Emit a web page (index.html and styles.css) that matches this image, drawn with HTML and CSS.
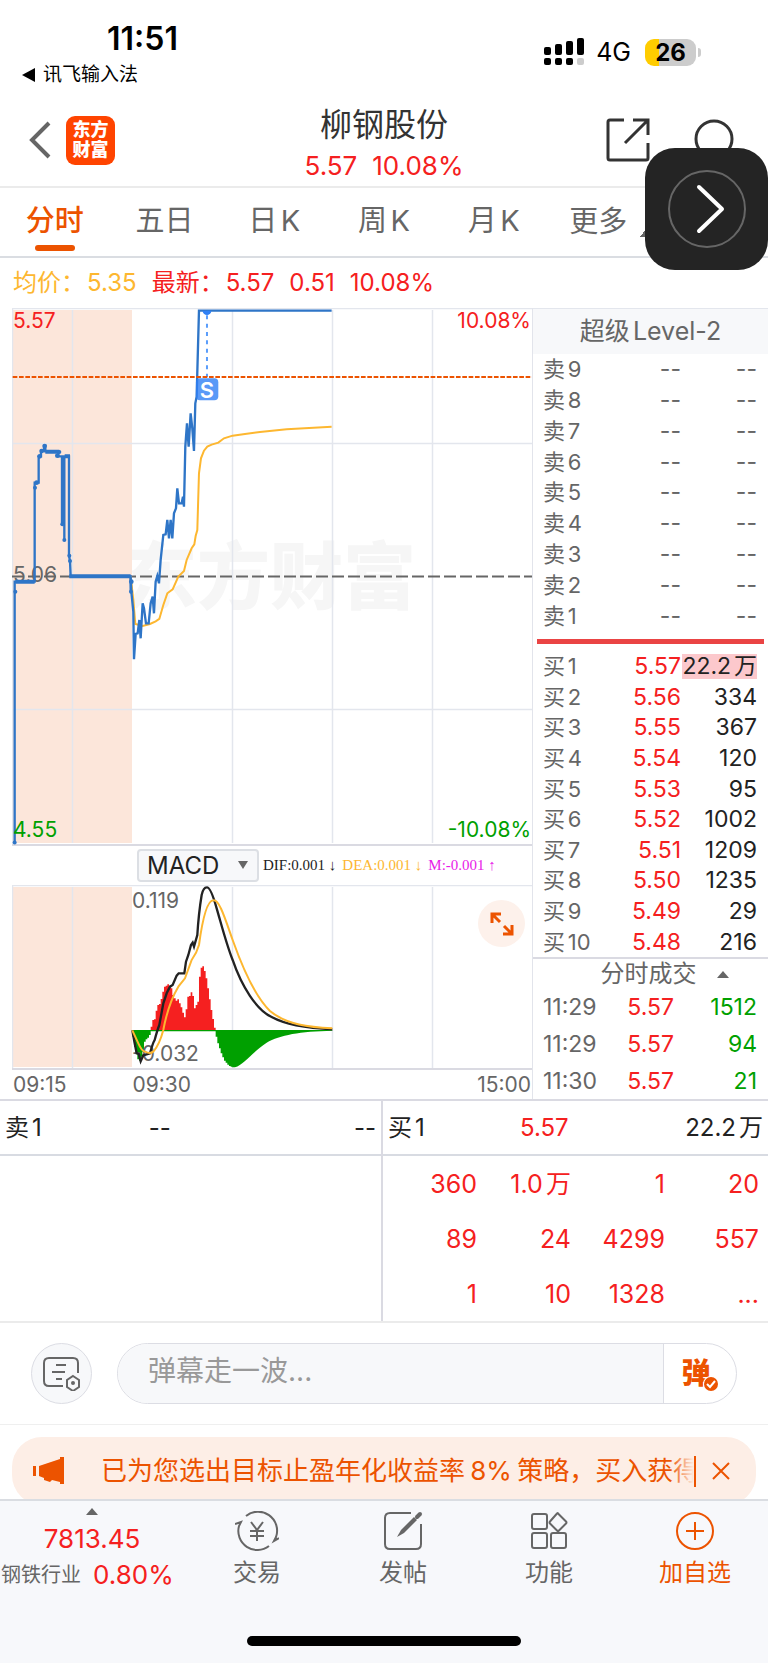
FILE: index.html
```
<!DOCTYPE html>
<html lang="zh-CN">
<head>
    <meta charset="UTF-8">
    <meta name="viewport" content="width=device-width, initial-scale=1.0">
    <title>柳钢股份 - 分时</title>
    <link rel="stylesheet" href="styles.css">
</head>
<body>
    <!-- Status bar -->
    <div class="status-bar">
        <div class="status-left">
            <div class="time">11:51</div>
            <a class="back-app" href="#"><span class="arrow-left"></span>讯飞输入法</a>
        </div>
        <div class="status-right">
            <svg class="signal" width="40" height="28" viewBox="0 0 40 28">
                <rect x="0" y="9" width="7" height="8" rx="2"/>
                <rect x="11" y="6" width="7" height="11" rx="2"/>
                <rect x="22" y="3" width="7" height="14" rx="2"/>
                <rect x="33" y="0" width="7" height="17" rx="2"/>
                <rect x="0" y="20" width="7" height="7" rx="2"/>
                <rect x="11" y="20" width="7" height="7" rx="2"/>
                <rect x="22" y="20" width="7" height="7" rx="2"/>
                <rect x="33" y="20" width="7" height="7" rx="2" fill="#ccc"/>
            </svg>
            <span class="network">4G</span>
            <span class="battery">26</span>
        </div>
    </div>

    <!-- Header -->
    <header class="header">
        <div class="header-left">
            <button class="icon-btn" aria-label="返回">
                <svg width="22" height="38" viewBox="0 0 22 38"><path d="M20 2L3 19l17 17" fill="none" stroke="#666" stroke-width="4"/></svg>
            </button>
            <a class="logo" href="#">东方<br>财富</a>
        </div>
        <div class="header-title">
            <h1>柳钢股份</h1>
            <p><span>5.57</span><span>10.08%</span></p>
        </div>
        <div class="header-right">
            <button class="icon-btn" aria-label="分享">
                <svg width="44" height="44" viewBox="0 0 44 44"><path d="M18 2H4q-2 0-2 2v36q0 2 2 2h36q2 0 2-2V25M27 2h15v15M42 2L19 25" fill="none" stroke="#333" stroke-width="3"/></svg>
            </button>
            <button class="icon-btn" aria-label="搜索">
                <svg width="44" height="44" viewBox="0 0 44 44"><path d="M33 34l9 9" stroke="#333" stroke-width="3"/><circle cx="22" cy="21" r="18" fill="none" stroke="#333" stroke-width="3"/></svg>
            </button>
        </div>
    </header>

    <!-- Tabs -->
    <nav class="tabs">
        <a class="tab active" href="#">分时</a>
        <a class="tab" href="#">五日</a>
        <a class="tab" href="#">日K</a>
        <a class="tab" href="#">周K</a>
        <a class="tab" href="#">月K</a>
        <a class="tab more" href="#">更多<span class="corner"></span></a>
    </nav>

    <button class="float-btn" aria-label="展开">
        <svg width="80" height="80" viewBox="0 0 80 80" fill="none" stroke-linecap="round" stroke-linejoin="round">
            <circle cx="40" cy="40" r="38" stroke="#666" stroke-width="2"/>
            <path d="M32 18l23 22-23 22" stroke="#fff" stroke-width="4"/>
        </svg>
    </button>

    <div class="summary">
        <span class="name avg">均价：</span><span class="avg">5.35</span>
        <span class="name">最新：</span><span>5.57</span><span>0.51</span><span>10.08%</span>
    </div>

    <main class="quote">
        <section class="charts">
            <!-- Price chart -->
            <svg class="price-chart" viewBox="0 0 520 538">
                <text class="watermark" x="112" y="295">东方财富</text>
                <rect class="preopen" x="0" y="2" width="120" height="533"/>
                <path class="grid" d="M0 135.500H520M0 401.500H520M60.500 2V535M220.500 2V535M320.500 2V535M420.500 2V535"/>
                <path class="grid" d="M.5 538V.5H520"/>
                <path class="mid-line" d="M0 268.500H520"/>
                <path class="base-line" d="M0 537H520"/>
                <text class="label gray" x="1" y="274">5.06</text>
                <g transform="translate(-12 -8) scale(.3333)">
                    <path class="price" d="M44 1628V875M44 1628V845H104V548H116V469H123V453H132V438H136V454H175V469H186V673V469H193V720V469H207V767L210 783L212 829H392V875"/>
                    <path class="avg-line" d="M392 829L400 900L406 972L428 978L450 972L467 964L478 957L490 915L502 880L518 868L535 830L552 813L560 780L575 745L583 733L587 708L592 690L597 520L603 475L612 452L622 440L635 434L655 428L672 415L698 407L735 402L780 396L860 388L995 380"/>
                    <path class="price" d="M392 829L394 875L400 935L402 1078L407 1002L413 1000L418 960L422 1015L428 910L432 925L438 970H446L452 910L458 890L462 940L467 845L472 828L477 850L482 780L490 705L497 703L502 660L507 715L512 660L517 715L522 640L528 625L532 565L537 610H545L549 590L552 620L556 440L561 370L566 440L572 340L577 385L582 453L586 310L590 290L597 32H995"/>
                    <g class="dots">
                        <circle cx="44" cy="1628" r="6"/><circle cx="46" cy="875" r="6"/><circle cx="105" cy="563" r="6"/>
                        <circle cx="110" cy="548" r="7"/><circle cx="119" cy="469" r="7"/><circle cx="125" cy="453" r="7"/>
                        <circle cx="134" cy="438" r="7"/><circle cx="172" cy="467" r="7"/><circle cx="178" cy="456" r="6"/>
                        <circle cx="187" cy="673" r="6"/><circle cx="193" cy="720" r="6"/><circle cx="208" cy="767" r="6"/>
                        <circle cx="210" cy="783" r="6"/><circle cx="394" cy="845" r="7"/><circle cx="393" cy="875" r="6"/>
                    </g>
                    <path class="pre-flat" d="M46 845H104M208 829H392M136 455H178M194 469H210"/>
                    <path d="M608 32a13 13 0 0 0 26 0z" fill="#2f80f5"/>
                    <path class="mark-line" d="M621 46V231"/>
                    <path class="limit-line" d="M38 231H1597"/>
                    <rect x="588" y="235" width="67" height="66" rx="12" fill="#2f80f5" fill-opacity=".8"/>
                </g>
                <text class="mark" x="195" y="90">S</text>
                <text class="label red" x="1" y="20">5.57</text>
                <text class="label red end" x="519" y="20">10.08%</text>
                <text class="label green" x="1" y="529">4.55</text>
                <text class="label green end" x="519" y="529">-10.08%</text>
            </svg>

            <!-- Indicator -->
            <div class="indicator">
                <div class="indicator-select">
                    <select aria-label="指标">
                        <option>MACD</option>
                    </select>
                </div>
                <span class="dif">DIF:0.001 ↓</span>
                <span class="dea">DEA:0.001 ↓</span>
                <span class="macd">M:-0.001 ↑</span>
            </div>

            <div class="macd-wrap">
                <svg class="macd-chart" viewBox="0 0 520 186">
                    <rect class="preopen" x="0" y="2" width="120" height="180"/>
                    <path class="grid" d="M60.500 2V183M220.500 2V183M320.500 2V183M420.500 2V183"/>
                    <path class="grid" d="M.5 184V.5H520"/>
                    <path class="base-line" d="M0 184H520"/>
                    <g transform="translate(108 -15) scale(.3333)">
                        <path class="bar-up" d="M92 481V470h5V450h5v-2h5V422h5V405h5V402h5V387h5V365h5V350h5V347h5V343h5V347h5V355h5V375h5V385h5V392h5V388h5V400h5V412h5V428h5V442h5V418h5V380h5V378h5V367h5V378h5V415h5V405h5V395h5V320h5V293h5V289h5V303h5V325h5V355h5V388h5V420h5V447h5V473h5V481z"/>
                        <path class="bar-down" d="M37 480V500h5V530h5V550h5V568h5V572h5V560h5V545h5V515h5V508h5V503h5V495h5V484H287V500h5V520h5V535h5V550h5V562h5V572h5V578h5V584h5V588h5V590h5V592H345C372 584 395 548 440 518C480 495 540 484 637 482V480z"/>
                    </g>
                    <text class="label gray" x="120" y="23">0.119</text>
                    <text class="label gray" x="120" y="176">-0.032</text>
                    <g transform="translate(108 -15) scale(.3333)">
                        <path class="dif-line" d="M37 481L43 515L50 550L56 552L62 574L70 556L90 550Q98 520 104 510Q112 480 118 465L130 400L140 370L150 350L158 345L170 317L176 310L193 310L198 275L205 255L213 225L218 218L222 230L232 195Q236 130 245 75Q250 52 260 52Q272 50 290 115C306 170 320 225 338 270C365 350 410 420 455 441C500 466 570 475 637 478"/>
                        <path class="dea-line" d="M37 481L55 520Q65 543 75 545Q90 553 100 545Q118 525 130 480Q145 400 175 350L195 325L215 270Q230 250 237 225Q255 92 280 91C298 88 315 145 338 210C370 300 405 380 450 423C500 465 570 472 637 475"/>
                    </g>
                </svg>
                <button class="expand-btn" aria-label="全屏">
                    <svg width="24" height="24" viewBox="0 0 24 24" fill="none" stroke="#ec5300" stroke-width="3"><path d="M2 11V2h9M2 2l8 8M22 13v9h-9M22 22l-8-8"/></svg>
                </button>
            </div>

            <div class="times"><span>09:15</span><span>09:30</span><span>15:00</span></div>
        </section>

        <!-- Order book -->
        <section class="book">
            <h2>超级Level-2</h2>
            <table class="levels sell">
                <tr><th>卖9</th><td>--</td><td>--</td></tr>
                <tr><th>卖8</th><td>--</td><td>--</td></tr>
                <tr><th>卖7</th><td>--</td><td>--</td></tr>
                <tr><th>卖6</th><td>--</td><td>--</td></tr>
                <tr><th>卖5</th><td>--</td><td>--</td></tr>
                <tr><th>卖4</th><td>--</td><td>--</td></tr>
                <tr><th>卖3</th><td>--</td><td>--</td></tr>
                <tr><th>卖2</th><td>--</td><td>--</td></tr>
                <tr><th>卖1</th><td>--</td><td>--</td></tr>
            </table>
            <div class="divider"></div>
            <table class="levels buy">
                <tr><th>买1</th><td>5.57</td><td><span class="big">22.2万</span></td></tr>
                <tr><th>买2</th><td>5.56</td><td>334</td></tr>
                <tr><th>买3</th><td>5.55</td><td>367</td></tr>
                <tr><th>买4</th><td>5.54</td><td>120</td></tr>
                <tr><th>买5</th><td>5.53</td><td>95</td></tr>
                <tr><th>买6</th><td>5.52</td><td>1002</td></tr>
                <tr><th>买7</th><td>5.51</td><td>1209</td></tr>
                <tr><th>买8</th><td>5.50</td><td>1235</td></tr>
                <tr><th>买9</th><td>5.49</td><td>29</td></tr>
                <tr><th>买10</th><td>5.48</td><td>216</td></tr>
            </table>
            <h3>分时成交<span class="tri-up"></span></h3>
            <table class="levels ticks">
                <tr><th>11:29</th><td>5.57</td><td>1512</td></tr>
                <tr><th>11:29</th><td>5.57</td><td>94</td></tr>
                <tr><th>11:30</th><td>5.57</td><td>21</td></tr>
            </table>
        </section>
    </main>

    <!-- Queue -->
    <section class="queue">
        <div class="queue-side">
            <div class="queue-head"><span>卖1</span><span>--</span><span>--</span></div>
        </div>
        <div class="queue-side">
            <div class="queue-head"><span>买1</span><span class="red">5.57</span><span>22.2万</span></div>
            <table class="queue-table">
                <tr><td>360</td><td>1.0万</td><td>1</td><td>20</td></tr>
                <tr><td>89</td><td>24</td><td>4299</td><td>557</td></tr>
                <tr><td>1</td><td>10</td><td>1328</td><td>...</td></tr>
            </table>
        </div>
    </section>

    <!-- Comment bar -->
    <div class="danmu">
        <button class="danmu-set" aria-label="弹幕设置">
            <svg width="38" height="34" viewBox="0 0 38 34" fill="none" stroke="#666" stroke-width="2">
                <path d="M20 29H6q-5 0-5-5V6q0-5 5-5h24q5 0 5 5v10M13 8h10M9 15h13M13 22h6"/>
                <path d="M30 19l6 4v7l-6 4-6-4v-7z"/><circle cx="30" cy="26" r="1" fill="#666"/>
            </svg>
        </button>
        <div class="danmu-box">
            <input type="text" placeholder="弹幕走一波..." aria-label="弹幕">
            <button class="danmu-send"><span>弹</span>
                <svg width="16" height="16" viewBox="0 0 16 16"><circle cx="8" cy="8" r="8" fill="#fff"/><circle cx="8" cy="8" r="7" fill="#ec5300"/><path d="M4 8l3 3 5-6" fill="none" stroke="#fff" stroke-width="2"/></svg>
            </button>
        </div>
    </div>

    <div class="notice-wrap">
        <div class="notice">
            <svg width="32" height="28" viewBox="0 0 32 28" fill="#ec5300"><path d="M0 9h3v10H0zM6 9l21-7V0h4v27h-4v-2l-8-2-2 2-6-2v-2l-5-2z"/></svg>
            <p>已为您选出目标止盈年化收益率<span class="rate">8%</span>策略，买入获得</p>
            <button class="icon-btn" aria-label="关闭">
                <svg width="18" height="18" viewBox="0 0 18 18"><path d="M1 1l16 16M17 1L1 17" stroke="#ec5300" stroke-width="2"/></svg>
            </button>
        </div>
    </div>

    <!-- Bottom bar -->
    <footer class="footer">
        <nav class="bottom-nav">
            <a class="sector" href="#">
                <span class="tri-up"></span>
                <span class="index">7813.45</span>
                <span class="sector-row">钢铁行业<b>0.80%</b></span>
            </a>
            <a class="nav-item" href="#">
                <svg width="44" height="40" viewBox="0 0 44 40" fill="none" stroke="#666" stroke-width="2">
                    <path d="M11 5A19 19 0 0 1 41 26L39 30L44 27M34 35A19 19 0 0 1 4 15L6 11L0 13"/>
                    <path d="M16 11l6 8 6-8M15 20h14M15 25h14M22 19v11"/>
                </svg>
                交易
            </a>
            <a class="nav-item" href="#">
                <svg width="40" height="40" viewBox="0 0 40 40" fill="none" stroke="#666" stroke-width="2">
                    <path d="M28 2H7Q2 2 2 7v26q0 5 5 5h26q5 0 5-5V13"/>
                    <path d="M14 26l4-7L31 6l3 3-13 13z" fill="#666" stroke="none"/><path d="M34 6l3-3" stroke-width="4" stroke-linecap="round"/>
                </svg>
                发帖
            </a>
            <a class="nav-item" href="#">
                <svg width="38" height="40" viewBox="0 0 38 40" fill="none" stroke="#666" stroke-width="2">
                    <rect x="2" y="3" width="15" height="15" rx="2"/><rect x="2" y="22" width="15" height="15" rx="2"/><rect x="21" y="22" width="15" height="15" rx="2"/>
                    <path d="M28 2.500l8 8q1 1 0 2l-7 7q-1 1-2 0l-7-7q-1-1 0-2l7-8q1-1 1 0z"/>
                </svg>
                功能
            </a>
            <a class="nav-item add" href="#">
                <svg width="40" height="40" viewBox="0 0 40 40" fill="none" stroke="#ec5300" stroke-width="2"><circle cx="20" cy="20" r="18"/><path d="M11 20h18M20 11v18"/></svg>
                加自选
            </a>
        </nav>
        <div class="home-bar"></div>
    </footer>
</body>
</html>
```
FILE: styles.css
```
* {
    box-sizing: border-box;
}
body {
    margin: 0;
    position: relative;
    background: #fff;
    color: #222;
    font-family: Inter, "Noto Sans CJK SC", sans-serif;
    text-autospace: normal;
    overflow-x: hidden;
}
h1, h2, h3, p {
    margin: 0;
    font-weight: 400;
}
a {
    color: inherit;
    text-decoration: none;
}
button, input, select {
    font-family: inherit;
    border: 0;
    padding: 0;
    background: none;
}
svg {
    display: block;
}
table {
    width: 100%;
    border-collapse: collapse;
    table-layout: fixed;
}
th, td {
    padding: 0;
    font-weight: 400;
    text-align: right;
}
.red {
    color: #f52020;
}

/* Status bar */
.status-bar {
    display: flex;
    justify-content: space-between;
    height: 94px;
    color: #000;
}
.status-left {
    padding: 20px 0 0 22px;
}
.time {
    padding-left: 85px;
    font-size: 32px;
    line-height: 38px;
    font-weight: 600;
}
.back-app {
    display: flex;
    align-items: center;
    gap: 8px;
    font-size: 19px;
    line-height: 34px;
}
.arrow-left {
    border: 7px solid transparent;
    border-right: 13px solid #000;
    border-left: 0;
}
.status-right {
    display: flex;
    align-items: center;
    height: 104px;
    padding-right: 72px;
}
.network {
    margin: 0 14px 0 12px;
    font-size: 25px;
    line-height: 30px;
}
.battery {
    position: relative;
    width: 51px;
    height: 27px;
    border-radius: 9px;
    background: linear-gradient(to right, #ffcc00 14px, #ccc 14px);
    font-size: 24px;
    line-height: 27px;
    font-weight: 700;
    text-align: center;
}
.battery::after {
    content: "";
    position: absolute;
    right: -5px;
    top: 9px;
    width: 3px;
    height: 9px;
    border-radius: 0 4px 4px 0;
    background: #ccc;
}

/* Header */
.header {
    display: grid;
    grid-template-columns: 1fr auto 1fr;
    align-items: center;
    height: 94px;
    border-bottom: 2px solid #ebebeb;
}
.header-left {
    display: flex;
    align-items: center;
    gap: 15px;
    padding-left: 29px;
}
.logo {
    width: 49px;
    height: 49px;
    padding-top: 4px;
    border-radius: 9px;
    background: #ff4400;
    color: #fff;
    font-size: 18px;
    line-height: 20px;
    font-weight: 800;
    text-align: center;
}
.header-title {
    padding-top: 8px;
    text-align: center;
}
.header-title h1 {
    color: #333;
    font-size: 32px;
    line-height: 44px;
}
.header-title p {
    display: flex;
    justify-content: center;
    gap: 15px;
    color: #f52020;
    font-size: 26px;
    line-height: 38px;
}
.header-right {
    display: flex;
    justify-content: flex-end;
    gap: 42px;
    padding-right: 32px;
}

/* Tabs */
.tabs {
    display: grid;
    grid-template-columns: repeat(7, 1fr);
    height: 70px;
    border-bottom: 2px solid #dadde2;
    color: #666;
    font-size: 29px;
    line-height: 66px;
    text-align: center;
}
.tab.active {
    position: relative;
    color: #ec5300;
    font-weight: 500;
}
.tab.active::after {
    content: "";
    position: absolute;
    left: 50%;
    bottom: 5px;
    width: 40px;
    height: 6px;
    margin-left: -20px;
    border-radius: 3px;
    background: #ec5300;
}
.tab.more {
    display: flex;
    justify-content: flex-end;
    align-items: center;
    gap: 12px;
    padding-right: 4px;
}
.corner {
    width: 15px;
    height: 15px;
    margin-top: 14px;
    background: linear-gradient(135deg, transparent 50%, #666 50%);
}
.float-btn {
    position: absolute;
    right: 0;
    top: 148px;
    display: flex;
    align-items: center;
    justify-content: center;
    width: 123px;
    height: 122px;
    border-radius: 30px;
    background: #242424;
}

.summary {
    display: flex;
    gap: 15px;
    padding-left: 13px;
    color: #f52020;
    font-size: 24px;
    line-height: 50px;
}
.summary .avg {
    color: #fdb730;
}
.summary .name {
    margin-right: -13px;
}

/* Charts */
.quote {
    display: grid;
    grid-template-columns: 533fr 235fr;
    border-bottom: 2px solid #dadae2;
}
.charts {
    min-width: 0;
    padding-left: 12px;
    border-right: 1px solid #e2e4eb;
}
.price-chart, .macd-chart {
    width: 100%;
    height: auto;
}
.preopen {
    fill: #fce6da;
}
.watermark {
    font-size: 73px;
    font-weight: 800;
    fill: #f6f6f6;
}
.grid {
    fill: none;
    stroke: #e3e6ed;
    stroke-width: 1.500;
}
.mid-line {
    stroke: #666;
    stroke-width: 2;
    stroke-dasharray: 12 4;
}
.base-line {
    stroke: #dadae2;
    stroke-width: 2;
}
.label {
    font-size: 21px;
}
.label.end {
    text-anchor: end;
}
.label.gray {
    fill: #666;
}
.label.red {
    fill: #f52020;
}
.label.green {
    fill: #00a000;
}
.price {
    fill: none;
    stroke: #2e75c7;
    stroke-width: 7;
}
.pre-flat {
    stroke: #2e75c7;
    stroke-width: 12;
}
.dots {
    fill: #2e75c7;
}
.avg-line, .dea-line {
    fill: none;
    stroke: #fdb730;
    stroke-width: 6;
}
.dif-line {
    fill: none;
    stroke: #222;
    stroke-width: 7;
}
.mark-line {
    stroke: #5a9dfb;
    stroke-width: 6;
    stroke-dasharray: 12 13;
}
.limit-line {
    stroke: #ec5300;
    stroke-width: 6;
    stroke-dasharray: 14 5;
}
.mark {
    font-size: 22px;
    font-weight: 600;
    fill: #fff;
    text-anchor: middle;
}
.bar-up {
    fill: #f52020;
}
.bar-down {
    fill: #00a000;
}
.indicator {
    display: flex;
    align-items: center;
    gap: 6px;
    height: 39px;
    padding-left: 125px;
    font-family: "Liberation Serif", serif;
    font-size: 15px;
    white-space: nowrap;
}
.indicator-select {
    position: relative;
    margin-right: -2px;
    font-family: Inter, sans-serif;
}
.indicator-select select {
    appearance: none;
    display: block;
    width: 122px;
    height: 33px;
    padding-left: 8px;
    border: 2px solid #dcdfe4;
    border-radius: 4px;
    background: #f7f8fa;
    color: #222;
    font-size: 24px;
    line-height: 28px;
}
.indicator-select::after {
    content: "";
    position: absolute;
    right: 11px;
    top: 12px;
    border: 5px solid transparent;
    border-top: 8px solid #666;
    border-bottom: 0;
}
.dea {
    color: #fdb730;
}
.macd {
    color: #e81ce8;
}
.macd-wrap {
    position: relative;
}
.expand-btn {
    position: absolute;
    right: 7px;
    top: 15px;
    display: flex;
    align-items: center;
    justify-content: center;
    width: 47px;
    height: 47px;
    border-radius: 50%;
    background: #fdf1eb;
}
.times {
    display: grid;
    grid-template-columns: 3fr 5fr 5fr;
    padding: 0 1px;
    color: #666;
    font-size: 21px;
    line-height: 28px;
}
.times span:last-child {
    text-align: right;
}

/* Order book */
.book h2 {
    background: #f7f8fa;
    color: #666;
    font-size: 25px;
    line-height: 45px;
    text-align: center;
    border-top: 1px solid #e3e6ed;
}
.levels {
    color: #222;
    font-size: 23px;
    line-height: 28px;
}
.levels th {
    width: 34%;
    padding-left: 10px;
    color: #666;
    font-size: 22px;
    text-align: left;
    white-space: nowrap;
}
.levels td:nth-child(2) {
    width: 29%;
}
.levels td:last-child {
    padding-right: 11px;
}
.sell {
    height: 277px;
}
.sell td {
    color: #666;
}
.divider {
    height: 5px;
    margin: 8px 4px 7px;
    background: #ea4444;
}
.buy {
    height: 306px;
}
.buy td:nth-child(2), .ticks td:nth-child(2) {
    color: #f52020;
}
.big {
    display: inline-block;
    line-height: 25px;
    background: #fcc8cc;
    white-space: nowrap;
}
.book h3 {
    display: flex;
    align-items: center;
    justify-content: center;
    gap: 20px;
    padding-left: 28px;
    border-top: 2px solid #dadae2;
    color: #666;
    font-size: 24px;
    line-height: 30px;
}
.tri-up {
    border: 6px solid transparent;
    border-bottom: 7px solid #666;
    border-top: 0;
}
.ticks {
    height: 110px;
}
.ticks th {
    font-size: 23px;
}
.ticks td:nth-child(2) {
    width: 26%;
}
.ticks td:last-child {
    color: #00a000;
}

/* Queue */
.queue {
    display: grid;
    grid-template-columns: 383fr 385fr;
    border-bottom: 2px solid #ebebeb;
    font-size: 24px;
}
.queue-side:first-child {
    border-right: 2px solid #dadae2;
}
.queue-head {
    display: grid;
    grid-template-columns: 1fr 1fr 1fr;
    padding: 0 5px;
    border-bottom: 2px solid #d8dbe2;
    line-height: 53px;
}
.queue-head span:nth-child(2) {
    padding-left: 20px;
}
.queue-head span:last-child {
    text-align: right;
}
.queue-head span.red {
    padding-left: 7px;
}
.queue-table {
    width: calc(100% - 9px);
    height: 165px;
    color: #f52020;
    font-size: 25px;
    line-height: 32px;
}
.queue-table tr {
    height: 55px;
}

/* Comment bar */
.danmu {
    display: flex;
    align-items: center;
    gap: 25px;
    height: 102px;
    padding: 0 31px;
    border-bottom: 1px solid #efefef;
}
.danmu-set {
    display: flex;
    align-items: center;
    justify-content: center;
    width: 61px;
    height: 61px;
    border: 1px solid #dcdde4;
    border-radius: 50%;
    background: #f7f8fa;
}
.danmu-box {
    display: flex;
    flex: 1;
    height: 61px;
    border: 1px solid #dcdde4;
    border-radius: 31px;
    overflow: hidden;
}
.danmu-box input {
    flex: 1;
    min-width: 0;
    padding: 0 30px 6px;
    background: #f7f8fa;
    font-size: 28px;
    text-autospace: no-autospace;
}
.danmu-box input::placeholder {
    color: #999;
}
.danmu-send {
    position: relative;
    width: 73px;
    padding-right: 8px;
    border-left: 1px solid #dcdde4;
    color: #ec5300;
    font-size: 29px;
    line-height: 58px;
    font-weight: 900;
}
.danmu-send svg {
    position: absolute;
    right: 17px;
    bottom: 11px;
}

/* Notice */
.notice-wrap {
    height: 74px;
    padding: 12px 12px 0;
    overflow: hidden;
}
.notice {
    display: flex;
    align-items: center;
    height: 68px;
    padding: 0 26px 0 21px;
    border-radius: 30px;
    background: #fdeee6;
    color: #ec5300;
}
.notice p {
    flex: 1;
    height: 31px;
    margin: 0 16px 0 36px;
    border-right: 2px solid #ec5300;
    overflow: hidden;
    font-size: 26px;
    line-height: 30px;
    white-space: nowrap;
    position: relative;
}
.notice p::after {
    content: "";
    position: absolute;
    right: 0;
    top: 0;
    width: 24px;
    height: 31px;
    background: linear-gradient(to right, #fdeee600, #fdeee6);
}
.rate {
    margin: 0 2px;
}

/* Bottom bar */
.footer {
    height: 164px;
    border-top: 2px solid #dadde2;
    background: #f7f8fb;
}
.bottom-nav {
    display: grid;
    grid-template-columns: 184px repeat(4, 1fr);
    height: 135px;
    color: #666;
}
.sector {
    display: flex;
    flex-direction: column;
    align-items: center;
    padding-top: 7px;
    white-space: nowrap;
}
.index {
    margin-top: 6px;
    color: #f52020;
    font-size: 26px;
    line-height: 36px;
}
.sector-row {
    display: flex;
    align-items: center;
    align-self: flex-start;
    gap: 12px;
    padding-left: 1px;
    font-size: 20px;
    line-height: 36px;
}
.sector-row b {
    color: #f52020;
    font-size: 26px;
    font-weight: 400;
}
.nav-item {
    display: flex;
    flex-direction: column;
    align-items: center;
    gap: 4px;
    padding-top: 10px;
    font-size: 24px;
    line-height: 36px;
}
.nav-item.add {
    color: #ec5300;
}
.home-bar {
    width: 274px;
    height: 10px;
    margin: 0 auto;
    border-radius: 5px;
    background: #000;
}
```
